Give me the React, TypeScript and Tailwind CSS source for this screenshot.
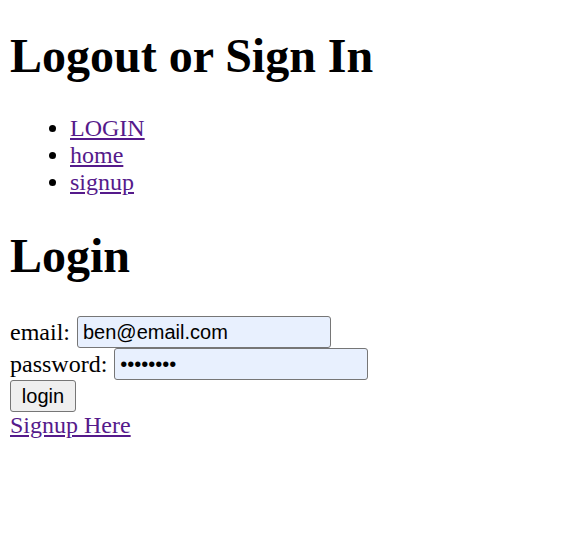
import React from 'react';

const serif = { fontFamily: '"Liberation Serif", "Times New Roman", serif' };

const linkCls = "text-[#551a8b] underline";

const fieldCls =
  "h-[32px] w-[254px] bg-[#e8f0fe] border border-[#767676] rounded-[3px] px-[5px] text-[20px] text-black outline-none";

export default function App() {
  return (
    <div className="px-[10px] bg-white text-black text-[24px] leading-[27px] min-h-[543px]" style={serif}>
      <h1 className="text-[48px] font-bold leading-[55px] pt-[28px] mb-[32px]">Logout or Sign In</h1>

      <ul className="list-disc pl-[60px] mb-[32px]">
        <li><a href="#" className={linkCls}>LOGIN</a></li>
        <li><a href="#" className={linkCls}>home</a></li>
        <li><a href="#" className={linkCls}>signup</a></li>
      </ul>

      <h1 className="text-[48px] font-bold leading-[55px] mb-[33px]">Login</h1>

      <form onSubmit={(e) => e.preventDefault()}>
        <div className="flex items-center h-[32px]">
          <span className="mr-[7px]">email:</span>
          <input
            type="email"
            readOnly
            defaultValue="ben@email.com"
            className={fieldCls}
            style={{ fontFamily: '"Liberation Sans", Arial, sans-serif' }}
          />
        </div>
        <div className="flex items-center h-[32px]">
          <span className="mr-[7px]">password:</span>
          <input
            type="password"
            readOnly
            defaultValue="password"
            className={fieldCls}
            style={{ fontFamily: '"Liberation Sans", Arial, sans-serif' }}
          />
        </div>
        <div className="flex items-center h-[32px]">
          <button
            type="submit"
            className="h-[32px] w-[66px] bg-[#efefef] border border-[#767676] rounded-[3px] text-[20px] text-black"
            style={{ fontFamily: '"Liberation Sans", Arial, sans-serif' }}
          >
            login
          </button>
        </div>
        <a href="#" className={`${linkCls} block w-fit`}>Signup Here</a>
      </form>
    </div>
  );
}
